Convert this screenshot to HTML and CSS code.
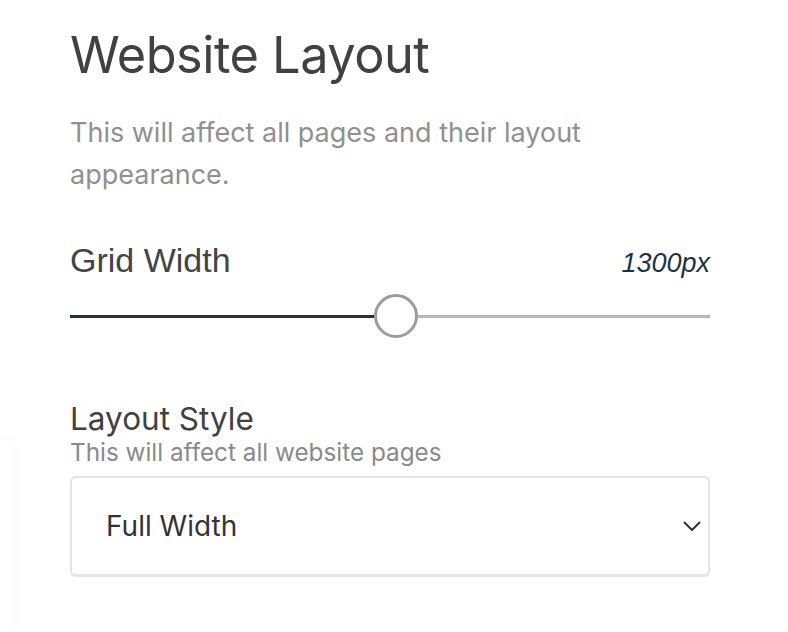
FILE: index.html
```html
<!DOCTYPE html>
<html>
<head>
<meta charset="utf-8">
<link rel="stylesheet" href="styles.css">
</head>
<body>
<div class="edge"></div>
<main class="panel">
  <h1 class="title">Website Layout</h1>
  <p class="desc">This will affect all pages and their layout appearance.</p>
  <div class="grid-head">
    <span class="label">Grid Width</span>
    <span class="value">1300px</span>
  </div>
  <div class="slider">
    <div class="fill"></div>
    <div class="thumb"></div>
    <div class="rest"></div>
  </div>
  <h2 class="sub-title">Layout Style</h2>
  <p class="sub-desc">This will affect all website pages</p>
  <div class="select">
    <span class="select-text">Full Width</span>
    <svg class="chev" width="18" height="10" viewBox="0 0 18 10"><path d="M1 1 L9 9 L17 1" fill="none" stroke="#333" stroke-width="2"/></svg>
  </div>
</main>
</body>
</html>
```
FILE: styles.css
```css
html, body { margin: 0; padding: 0; background: #fff; }
body { font-family: Inter, "Noto Sans", sans-serif; }
.edge { position: absolute; left: 0; top: 440px; width: 12px; height: 192px; box-shadow: 2px 0 8px rgba(0,0,0,0.03); }
.panel { width: 640px; margin-left: 70px; padding-top: 24px; display: flex; flex-direction: column; }
.title { margin: 0; font-weight: 400; font-size: 50.5px; line-height: 62px; color: #414141; letter-spacing: -0.5px; }
.desc { margin: 26px 0 0; font-size: 27px; line-height: 42px; color: #909090; width: 560px; }
.grid-head { display: flex; justify-content: space-between; align-items: baseline; margin-top: 44px; }
.label { font-family: "Liberation Sans", Arial, sans-serif; font-size: 34px; line-height: 40px; color: #444; }
.value { font-family: "Liberation Sans", Arial, sans-serif; font-style: italic; font-size: 27px; color: #1b3542; }
.slider { display: flex; align-items: center; height: 46px; margin-top: 13px; }
.fill { width: 304px; height: 3px; background: #1f3640; }
.thumb { width: 38px; height: 38px; border: 3px solid #9c9ca0; border-radius: 50%; background: #fff; flex: none; }
.rest { flex: 1; height: 3px; background: #b5b5c3; }
.sub-title { margin: 62px 0 0; font-weight: 400; font-size: 31.5px; line-height: 36px; color: #414141; }
.sub-desc { margin: 0; font-size: 24.3px; line-height: 30px; color: #8a8a8a; }
.select { margin-top: 9px; height: 96px; border: 2px solid #e4e4e4; border-bottom-width: 3px; border-radius: 6px; display: flex; align-items: center; justify-content: space-between; padding: 0 7px 0 34px; }
.select-text { font-size: 28px; color: #333; }
.chev { margin-right: 0; }
```
